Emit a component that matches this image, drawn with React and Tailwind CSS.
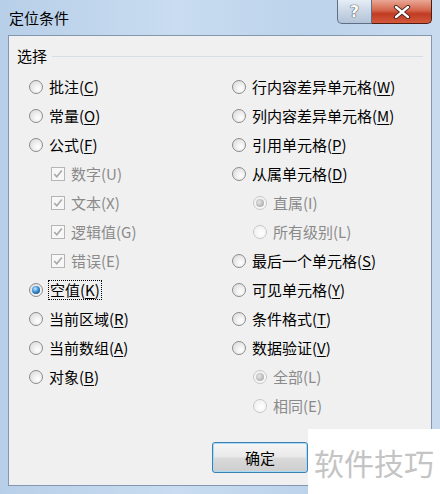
import React from 'react';

const leftItems = [
  { type: 'radio', label: '批注', key: 'C' },
  { type: 'radio', label: '常量', key: 'O' },
  { type: 'radio', label: '公式', key: 'F' },
  { type: 'check', label: '数字', key: 'U' },
  { type: 'check', label: '文本', key: 'X' },
  { type: 'check', label: '逻辑值', key: 'G' },
  { type: 'check', label: '错误', key: 'E' },
  { type: 'radio', label: '空值', key: 'K', checked: true },
  { type: 'radio', label: '当前区域', key: 'R' },
  { type: 'radio', label: '当前数组', key: 'A' },
  { type: 'radio', label: '对象', key: 'B' },
];

const rightItems = [
  { type: 'radio', label: '行内容差异单元格', key: 'W' },
  { type: 'radio', label: '列内容差异单元格', key: 'M' },
  { type: 'radio', label: '引用单元格', key: 'P' },
  { type: 'radio', label: '从属单元格', key: 'D' },
  { type: 'sub', label: '直属', key: 'I', checked: true },
  { type: 'sub', label: '所有级别', key: 'L' },
  { type: 'radio', label: '最后一个单元格', key: 'S' },
  { type: 'radio', label: '可见单元格', key: 'Y' },
  { type: 'radio', label: '条件格式', key: 'T' },
  { type: 'radio', label: '数据验证', key: 'V' },
  { type: 'sub', label: '全部', key: 'L', checked: true },
  { type: 'sub', label: '相同', key: 'E' },
];

// Win7 style radio
const Radio = ({ checked, disabled }) => (
  <span
    className={`w-[14px] h-[14px] rounded-full border flex items-center justify-center shrink-0 ${
      disabled
        ? 'border-[#c8c8c8] bg-[radial-gradient(circle_at_60%_60%,#ffffff,#ececec)]'
        : 'border-[#8c8c8c] bg-[radial-gradient(circle_at_65%_65%,#ffffff,#d6d6d6)]'
    }`}
  >
    {checked && (
      <span
        className={`w-[8px] h-[8px] rounded-full ${
          disabled
            ? 'bg-[radial-gradient(circle_at_40%_40%,#e6e6e6,#9c9c9c)]'
            : 'bg-[radial-gradient(circle_at_40%_35%,#c4e6ff,#2f86d0_50%,#0a2c58)]'
        }`}
      />
    )}
  </span>
);

const Check = () => (
  <span className="w-[14px] h-[14px] border border-[#b5b5b5] bg-[#f7f7f7] flex items-center justify-center shrink-0">
    <svg width="10" height="10" viewBox="0 0 10 10">
      <path d="M1.2 5 L3.8 7.8 L8.8 1.5" fill="none" stroke="#a8a8a8" strokeWidth="1.6" />
    </svg>
  </span>
);

const Label = ({ label, k, disabled }) => (
  <span className={disabled ? 'text-[#8a8a8a]' : 'text-black'}>
    {label}(
    {disabled ? k : <span className="underline underline-offset-2">{k}</span>})
  </span>
);

const Row = ({ item }) => {
  if (item.type === 'check') {
    return (
      <div className="h-[29px] flex items-center pl-[22px] gap-[6px]">
        <Check />
        <Label label={item.label} k={item.key} disabled />
      </div>
    );
  }
  if (item.type === 'sub') {
    return (
      <div className="h-[29px] flex items-center pl-[21px] gap-[6px]">
        <Radio checked={item.checked} disabled />
        <Label label={item.label} k={item.key} disabled />
      </div>
    );
  }
  return (
    <div className="h-[29px] flex items-center gap-[5px]">
      <Radio checked={item.checked} />
      {item.checked ? (
        <span className="border border-dotted border-black px-[1px] leading-[18px]">
          <Label label={item.label} k={item.key} />
        </span>
      ) : (
        <span className="px-[1px]">
          <Label label={item.label} k={item.key} />
        </span>
      )}
    </div>
  );
};

const App = () => {
  return (
    <div
      className="w-[440px] h-[494px] relative overflow-hidden bg-[linear-gradient(90deg,#b7cfe8,#c9dcf0_40%,#bcd3eb_70%,#c7daee)] text-[15px] leading-[20px]"
      style={{ fontFamily: '"Noto Sans CJK SC", "Microsoft YaHei", sans-serif' }}
    >
      {/* title bar */}
      <div className="h-[35px] flex items-start justify-between">
        <div className="pl-[9px] pt-[8px] text-black">定位条件</div>
        <div className="flex mr-[8px]">
          <div className="w-[35px] h-[24px] border border-[#5e6e83] border-t-0 rounded-bl-[5px] bg-[linear-gradient(#e6eef7,#c9d6e5_50%,#b3c4d8)] flex items-center justify-center">
            <span className="text-[16px] font-bold text-white [text-shadow:0_0_1px_#333,0_0_1px_#333]" style={{ fontFamily: '"DejaVu Sans", sans-serif' }}>?</span>
          </div>
          <div className="w-[60px] h-[24px] border border-[#4f1b12] border-t-0 border-l-0 rounded-br-[5px] bg-[linear-gradient(#e9a896,#d4664c_45%,#c13b22_60%,#d35a3c)] flex items-center justify-center">
            <svg width="18" height="14" viewBox="0 0 18 14">
              <path d="M3 2 L15 12 M15 2 L3 12" stroke="#3a1a14" strokeWidth="4.2" strokeLinecap="round" />
              <path d="M3 2 L15 12 M15 2 L3 12" stroke="#ffffff" strokeWidth="2.4" strokeLinecap="round" />
            </svg>
          </div>
        </div>
      </div>

      {/* client area */}
      <div className="mx-[8px] h-[451px] bg-[#f0f0f0] border border-[#8497b0] flex flex-col">
        <div className="flex items-center pl-[8px] pr-[8px] pt-[10px] gap-[5px]">
          <span className="text-black">选择</span>
          <div className="flex-1 h-px bg-[#d5dde6]" />
        </div>
        <div className="flex pt-[6px]">
          <div className="w-[223px] pl-[20px] flex flex-col">
            {leftItems.map((it, i) => (
              <Row key={i} item={it} />
            ))}
          </div>
          <div className="flex-1 flex flex-col">
            {rightItems.map((it, i) => (
              <Row key={i} item={it} />
            ))}
          </div>
        </div>
        <div className="flex pl-[203px] pt-[22px]">
          <div className="w-[96px] h-[31px] rounded-[3px] border border-[#3c7fb1] shadow-[inset_0_0_0_1px_#a8dcf6] bg-[linear-gradient(#f6f6f6,#e9e9e9_48%,#dadada_52%,#cdcdcd)] flex items-center justify-center text-black">
            确定
          </div>
        </div>
      </div>

      {/* watermark overlay */}
      <div className="absolute left-[308px] top-[429px] w-[132px] h-[65px] bg-white flex items-center pl-[6px]">
        <span className="text-[30px] leading-[34px] text-[#c4c4c4]">软件技巧</span>
      </div>
    </div>
  );
};

export default App;
